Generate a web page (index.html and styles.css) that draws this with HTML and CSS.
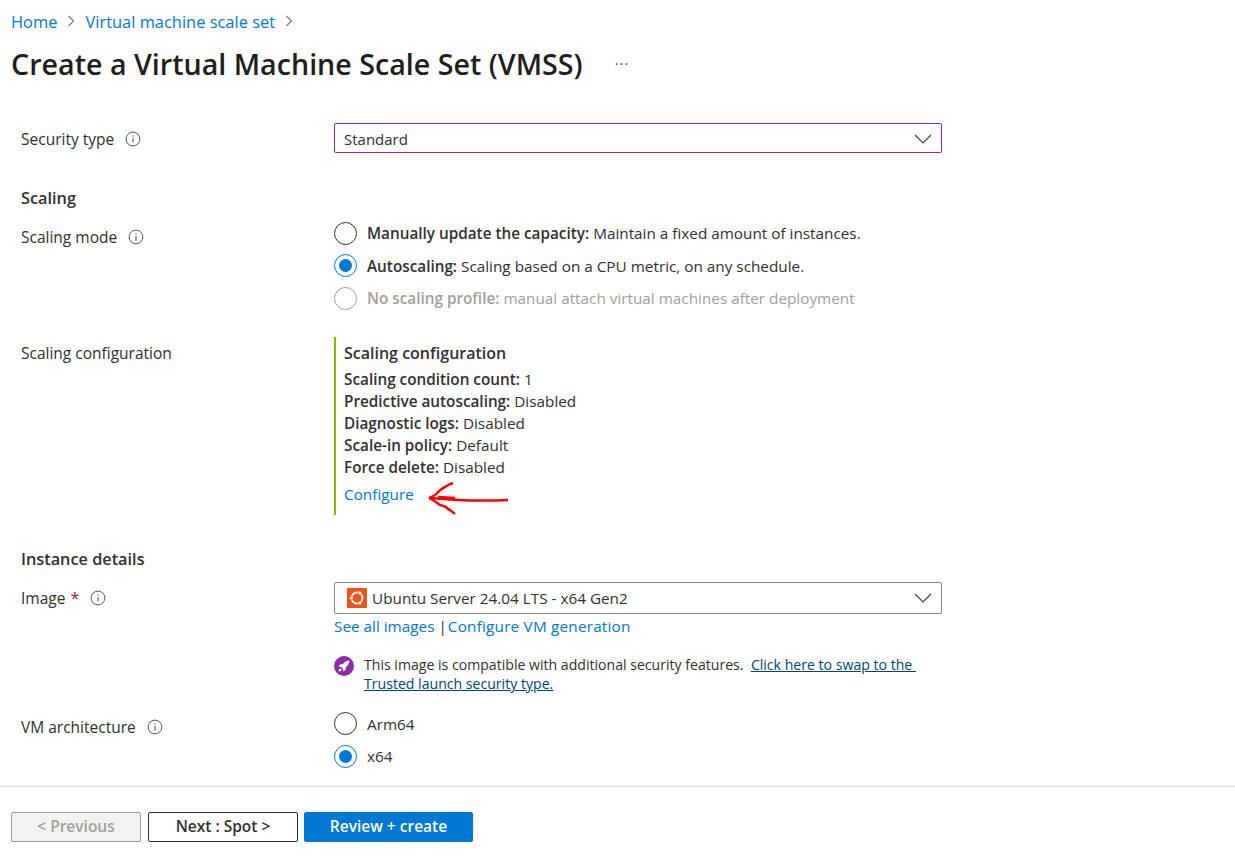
FILE: index.html
```html
<!DOCTYPE html>
<html lang="en">
<head>
<meta charset="utf-8">
<title>Create a Virtual Machine Scale Set (VMSS)</title>
<link rel="stylesheet" href="styles.css">
</head>
<body>
<div class="page">
  <main class="main">
    <nav class="crumbs">
      <a href="#">Home</a>
      <svg class="crumb-sep" viewBox="0 0 10 14"><path d="M2.5 2l5 5-5 5"/></svg>
      <a href="#">Virtual machine scale set</a>
      <svg class="crumb-sep" viewBox="0 0 10 14"><path d="M2.5 2l5 5-5 5"/></svg>
    </nav>
    <header class="title-row">
      <h1>Create a Virtual Machine Scale Set (VMSS)</h1>
      <span class="more">···</span>
    </header>

    <section class="form">
      <div class="row row-security">
        <div class="label label-security">Security type <svg class="info" viewBox="0 0 16 16"><use href="#i-info"/></svg></div>
        <div class="select select-focus"><span>Standard</span><svg class="chev" viewBox="0 0 18 10"><path d="M1 1l8 8 8-8"/></svg></div>
      </div>

      <h2 class="h-scaling">Scaling</h2>
      <div class="row row-mode">
        <div class="label label-mode">Scaling mode <svg class="info" viewBox="0 0 16 16"><use href="#i-info"/></svg></div>
        <div class="radios">
          <div class="radio"><span class="dot"></span><span><b>Manually update the capacity:</b> Maintain a fixed amount of instances.</span></div>
          <div class="radio"><span class="dot on"></span><span><b>Autoscaling:</b> Scaling based on a CPU metric, on any schedule.</span></div>
          <div class="radio disabled"><span class="dot"></span><span><b>No scaling profile:</b> manual attach virtual machines after deployment</span></div>
        </div>
      </div>

      <div class="row row-config">
        <div class="label label-config">Scaling configuration</div>
        <div class="config">
          <div class="config-title">Scaling configuration</div>
          <div class="config-lines">
            <div><b>Scaling condition count:</b> 1</div>
            <div><b>Predictive autoscaling:</b> Disabled</div>
            <div><b>Diagnostic logs:</b> Disabled</div>
            <div><b>Scale-in policy:</b> Default</div>
            <div><b>Force delete:</b> Disabled</div>
          </div>
          <div class="config-link">
            <a href="#">Configure</a>
            <svg class="arrow" viewBox="0 0 82 36"><path d="M80 19C60 20 30 19.500 1 17"/><path d="M1 17C6 15 9 13 10 11 13 9 14 7 17 6 20 4 22 3 25 2"/><path d="M1 17C6 19 9 22 12 24 16 25 19 26 20 28 23 29 25 31 27 33"/><path d="M10 16L27 17"/></svg>
          </div>
        </div>
      </div>

      <h2 class="h-instance">Instance details</h2>
      <div class="row row-image">
        <div class="label">Image <span class="req">*</span> <svg class="info" viewBox="0 0 16 16"><use href="#i-info"/></svg></div>
        <div class="image-col">
          <div class="select select-image">
            <span class="image-name">
              <svg class="ubuntu" viewBox="0 0 20 20"><rect width="20" height="20" fill="#e95420"/><circle cx="10" cy="10" r="5.500" fill="none" stroke="#fff" stroke-width="1.800"/><circle cx="4.300" cy="10" r="1.800" fill="#fff" stroke="#e95420" stroke-width=".6"/><circle cx="12.900" cy="5" r="1.800" fill="#fff" stroke="#e95420" stroke-width=".6"/><circle cx="12.900" cy="15" r="1.800" fill="#fff" stroke="#e95420" stroke-width=".6"/></svg>
              Ubuntu Server 24.04 LTS - x64 Gen2
            </span>
            <svg class="chev" viewBox="0 0 18 10"><path d="M1 1l8 8 8-8"/></svg>
          </div>
          <div class="image-links"><a href="#">See all images</a><span class="sep">|</span><a class="link-gen" href="#">Configure VM generation</a></div>
          <div class="notice">
            <svg class="rocket" viewBox="0 0 20 20"><circle cx="10" cy="10" r="10" fill="#8a2da5"/><path fill="#fff" d="M15.500 4.500c-3 .2-5 1.400-6.700 3.600L6 8.400 4.600 10.600l2.500.3 2 2 .3 2.500 2.200-1.400.3-2.800c2.200-1.700 3.400-3.700 3.600-6.700zM6.200 12.300c-1 .4-1.500 1.300-1.700 3.200 1.900-.2 2.800-.7 3.200-1.700z"/></svg>
            <p>This image is compatible with additional security features.&nbsp;&nbsp;<a href="#">Click here to swap to the&nbsp;<br>Trusted launch security type.</a></p>
          </div>
        </div>
      </div>

      <div class="row row-arch">
        <div class="label label-arch">VM architecture <svg class="info" viewBox="0 0 16 16"><use href="#i-info"/></svg></div>
        <div class="radios">
          <div class="radio"><span class="dot"></span><span>Arm64</span></div>
          <div class="radio"><span class="dot on"></span><span>x64</span></div>
        </div>
      </div>
    </section>
  </main>

  <footer class="footer">
    <button class="btn btn-prev" type="button">&lt; Previous</button>
    <button class="btn btn-next" type="button">Next : Spot &gt;</button>
    <button class="btn btn-primary" type="button">Review + create</button>
  </footer>
</div>

<svg class="defs" width="0" height="0">
  <symbol id="i-info" viewBox="0 0 16 16">
    <circle cx="8" cy="8" r="6.900" fill="none" stroke="#555" stroke-width="1"/>
    <rect x="7.500" y="7" width="1" height="4.500" fill="#444"/>
    <rect x="7.500" y="4.500" width="1" height="1.200" fill="#444"/>
  </symbol>
</svg>
</body>
</html>
```
FILE: styles.css
```css
* { box-sizing: border-box; }
html, body { margin: 0; height: 100%; }
body {
  font-family: "Open Sans", "Noto Sans", sans-serif;
  font-size: 15.300px;
  color: #323130;
  background: #fff;
  overflow: hidden;
}
a { color: #0078d4; text-decoration: none; }
b { font-weight: 600; }
.defs { position: absolute; }
.page { display: flex; flex-direction: column; height: 863px; }
.main { flex: 1; padding: 0 0 0 11px; }

.crumbs { display: flex; align-items: center; height: 22px; margin-top: 10px; font-size: 16.450px; }
.crumb-sep { width: 10px; height: 14px; margin: 0 9px; fill: none; stroke: #777; stroke-width: 1.100; }

.title-row { display: flex; align-items: center; height: 40px; margin-top: 11px; }
h1 { margin: 0; font-size: 28.650px; font-weight: 600; color: #201f1e; white-space: nowrap; }
.more { margin-left: 32px; font-size: 15px; letter-spacing: 1px; color: #555; }

.form { margin-left: 10px; width: 921px; }
.row { display: grid; grid-template-columns: 313px 608px; }
.label { display: flex; align-items: center; gap: 11px; height: 30px; white-space: nowrap; font-size: 15.500px; }
.label-security { padding-top: 2px; }
.info { width: 16px; height: 16px; flex: none; }
.req { color: #a4262c; margin-left: -6px; font-size: 16px; }

.select {
  display: flex; align-items: center; justify-content: space-between;
  border: 1px solid #8a8886; border-radius: 2px; padding: 0 9px;
}
.select-focus { height: 30px; border-color: #8a2da5; font-size: 15px; padding-top: 1px; }
.select-image { height: 32px; padding-left: 12px; }
.image-name { display: flex; align-items: center; gap: 5px; }
.ubuntu { width: 20px; height: 20px; }
.chev { width: 18px; height: 10px; fill: none; stroke: #444; stroke-width: 1.200; }

.row-security { margin-top: 40px; }
h2 { margin: 0; font-size: 16.300px; font-weight: 600; line-height: 22px; color: #323130; }
.h-scaling { margin-top: 34px; }
.row-mode { margin-top: 8px; }
.label-mode { height: 22px; margin-top: 9px; }
.radios { display: flex; flex-direction: column; }
.radio { display: flex; align-items: center; gap: 10px; height: 32.500px; white-space: nowrap; }
.dot { width: 23px; height: 23px; border: 1.500px solid #323130; border-radius: 50%; background: #fff; flex: none; position: relative; }
.dot.on { border-color: #0078d4; }
.dot.on::after { content: ""; position: absolute; inset: 4px; border-radius: 50%; background: #0078d4; }
.radio.disabled { color: #a19f9d; }
.radio.disabled .dot { border-color: #a19f9d; }

.row-config { margin-top: 22px; }
.label-config { height: 22px; margin-top: 5px; }
.config { border-left: 2px solid #7fba00; height: 178px; padding: 5px 0 0 8px; }
.config-title { font-weight: 600; font-size: 16px; line-height: 22px; }
.config-lines { margin-top: 4px; line-height: 22px; }
.config-link { position: relative; margin-top: 5px; line-height: 22px; }
.arrow { position: absolute; left: 84px; top: -2px; width: 82px; height: 36px; fill: none; stroke: #ff0000; stroke-width: 2.400; }

.h-instance { margin-top: 33px; }
.row-image { margin-top: 12px; }
.row-image .label { height: 32px; }
.image-links { line-height: 24px; white-space: nowrap; }
.sep { margin: 0 1px 0 4px; }
.link-gen { letter-spacing: .2px; }
.notice { display: flex; gap: 10px; margin-top: 17px; }
.rocket { width: 20px; height: 20px; flex: none; margin-top: 1px; }
.notice p { margin: 0; font-size: 14.100px; line-height: 19px; white-space: nowrap; }
.notice a { color: #004578; text-decoration: underline; }

.row-arch { margin-top: 15px; }
.label-arch { height: 32px; margin-top: 3px; }

.footer {
  display: flex; gap: 7px; height: 77px; padding: 25px 0 0 11px;
  border-top: 1px solid #e1dfdd;
}
.btn { height: 30px; border-radius: 2px; font: 600 15.500px "Open Sans", "Noto Sans", sans-serif; padding: 0 0 2px; border: 1px solid #323130; background: #fff; color: #323130; }
.btn-prev { width: 130px; background: #f3f2f1; border-color: #a19f9d; color: #a19f9d; }
.btn-next { width: 150px; }
.btn-primary { width: 169px; background: #0078d4; border-color: #0078d4; color: #fff; margin-left: -1px; }
```
